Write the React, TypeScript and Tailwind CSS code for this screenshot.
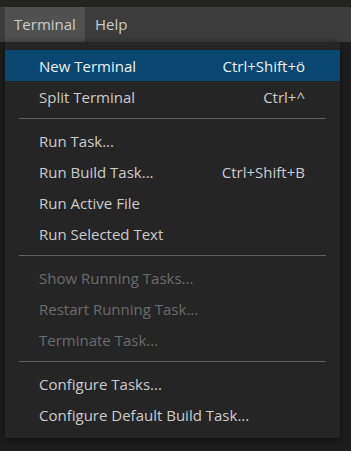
type Item =
  | { kind: 'item'; label: string; keys?: string; active?: boolean; disabled?: boolean }
  | { kind: 'sep' };

const ITEMS: Item[] = [
  { kind: 'item', label: 'New Terminal', keys: 'Ctrl+Shift+ö', active: true },
  { kind: 'item', label: 'Split Terminal', keys: 'Ctrl+^' },
  { kind: 'sep' },
  { kind: 'item', label: 'Run Task...' },
  { kind: 'item', label: 'Run Build Task...', keys: 'Ctrl+Shift+B' },
  { kind: 'item', label: 'Run Active File' },
  { kind: 'item', label: 'Run Selected Text' },
  { kind: 'sep' },
  { kind: 'item', label: 'Show Running Tasks...', disabled: true },
  { kind: 'item', label: 'Restart Running Task...', disabled: true },
  { kind: 'item', label: 'Terminate Task...', disabled: true },
  { kind: 'sep' },
  { kind: 'item', label: 'Configure Tasks...' },
  { kind: 'item', label: 'Configure Default Build Task...' },
];

export default function App() {
  return (
    <div
      className="w-[351px] h-[451px] bg-[#1e1e1e] flex flex-col overflow-hidden text-[15px]"
      style={{ fontFamily: '"Open Sans", "Noto Sans", sans-serif' }}
    >
      {/* Title strip */}
      <div className="h-[7px] bg-[#232320] shrink-0" />

      {/* Menu bar */}
      <div className="h-[35px] bg-[#3c3c3c] flex items-stretch pl-[5px] shrink-0">
        <div className="bg-[#505050] text-[#cccccc] w-[80px] flex items-center justify-center">Terminal</div>
        <div className="text-[#cccccc] px-[10px] flex items-center">Help</div>
      </div>

      {/* Dropdown */}
      <div className="pl-[5px] flex">
        <div className="w-[335px] bg-[#252526] py-[8px] shadow-[0_2px_8px_rgba(0,0,0,0.6)]">
          {ITEMS.map((it, i) =>
            it.kind === 'sep' ? (
              <div key={i} className="h-[13px] flex items-center px-[14px]">
                <div className="h-px w-full bg-[#606060]" />
              </div>
            ) : (
              <div
                key={i}
                className={`h-[31px] flex items-center justify-between pl-[34px] pr-[35px] pt-[2px] ${
                  it.active ? 'bg-[#094771] text-[#f0f0f0]' : it.disabled ? 'text-[#6b6b6b]' : 'text-[#cccccc]'
                }`}
              >
                <span>{it.label}</span>
                {it.keys && <span>{it.keys}</span>}
              </div>
            )
          )}
        </div>
      </div>
    </div>
  );
}
